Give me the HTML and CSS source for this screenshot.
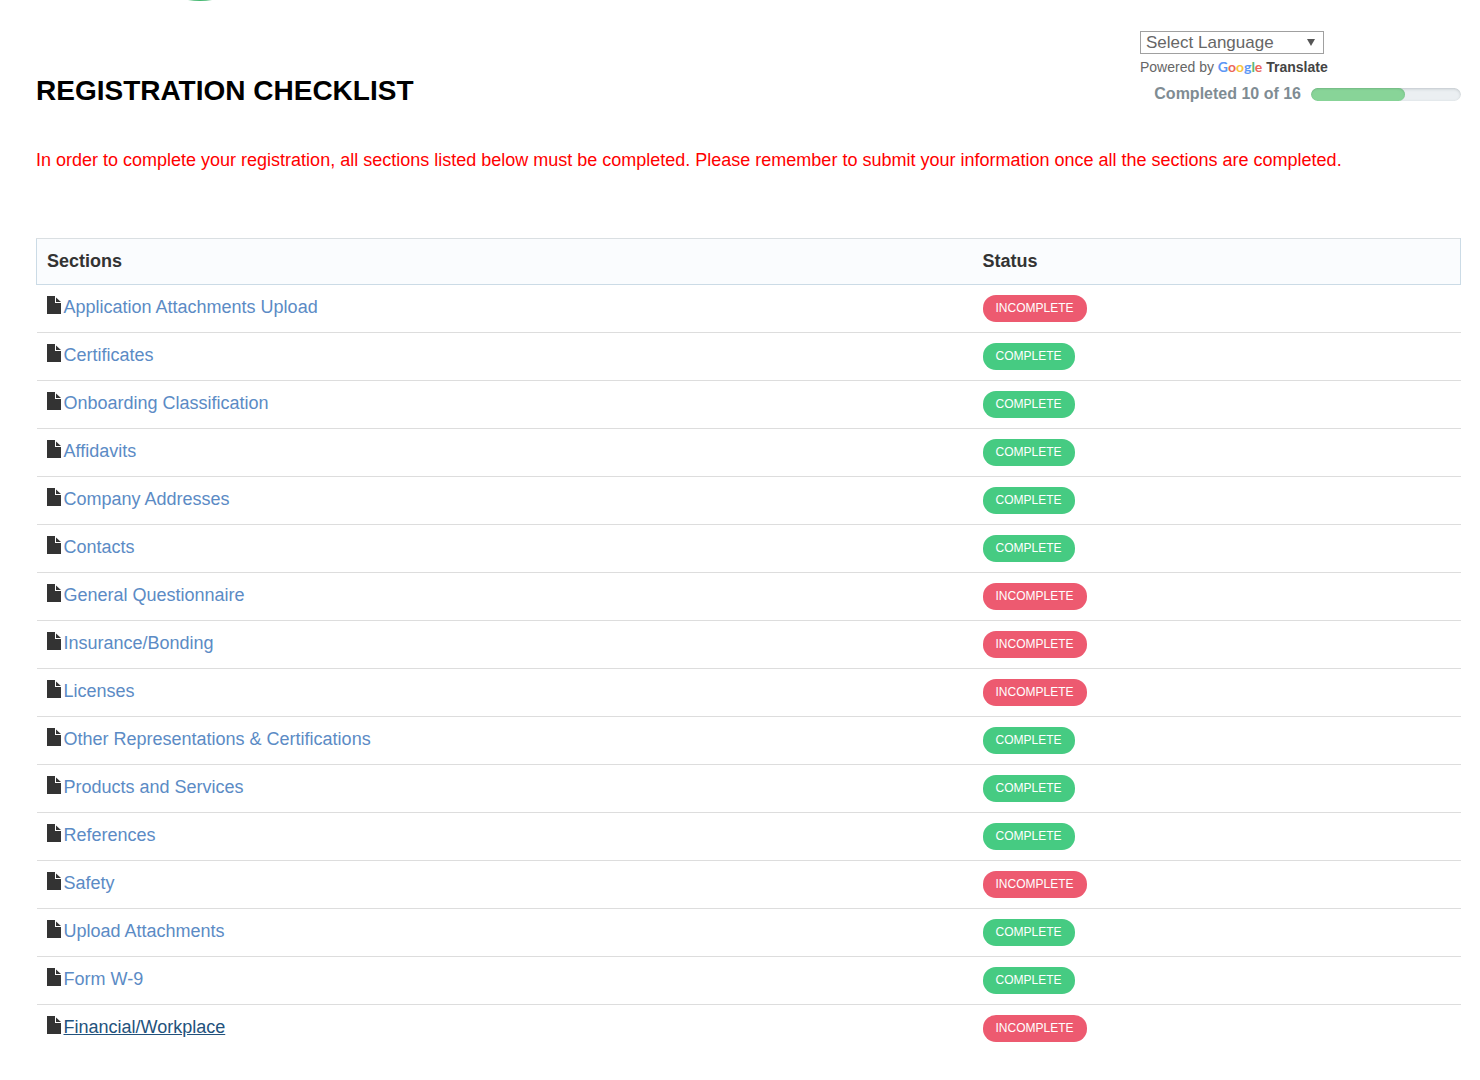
FILE: index.html
```html
<!DOCTYPE html>
<html lang="en">
<head>
<meta charset="utf-8">
<title>Registration Checklist</title>
<link rel="stylesheet" href="styles.css">
</head>
<body>
<svg class="symbols" aria-hidden="true">
  <symbol id="file" viewBox="0 0 14 18"><path d="M0 0h8v7h6v11H0z"/><path d="M9 1.500l5 4.500H9z"/></symbol>
</svg>
<div class="brand"><svg width="24" height="1" viewBox="0 0 24 1" aria-hidden="true"><path d="M0 0h24Q12 2 0 0z" fill="#45b871"/></svg></div>
<main class="page">
  <header class="top">
    <h1>REGISTRATION CHECKLIST</h1>
    <div class="tools">
      <div class="select-wrap">
        <select class="language" aria-label="Select Language"><option>Select Language</option></select>
        <svg class="arrow" width="8" height="7" viewBox="0 0 8 7" aria-hidden="true"><path d="M0 0h8L4 7z"/></svg>
      </div>
      <div class="powered">Powered by <span class="google"><span class="blue">G</span><span class="red">o</span><span class="yellow">o</span><span class="blue">g</span><span class="green">l</span><span class="red">e</span></span> <b>Translate</b></div>
      <div class="completion"><label for="done">Completed 10 of 16</label><progress id="done" value="10" max="16"></progress></div>
    </div>
  </header>
  <p class="notice">In order to complete your registration, all sections listed below must be completed. Please remember to submit your information once all the sections are completed.</p>
  <table class="checklist">
    <thead><tr><th>Sections</th><th class="status-col">Status</th></tr></thead>
    <tbody>
      <tr><td><svg class="file"><use href="#file"/></svg><a href="#">Application Attachments Upload</a></td><td><span class="badge incomplete">INCOMPLETE</span></td></tr>
      <tr><td><svg class="file"><use href="#file"/></svg><a href="#">Certificates</a></td><td><span class="badge complete">COMPLETE</span></td></tr>
      <tr><td><svg class="file"><use href="#file"/></svg><a href="#">Onboarding Classification</a></td><td><span class="badge complete">COMPLETE</span></td></tr>
      <tr><td><svg class="file"><use href="#file"/></svg><a href="#">Affidavits</a></td><td><span class="badge complete">COMPLETE</span></td></tr>
      <tr><td><svg class="file"><use href="#file"/></svg><a href="#">Company Addresses</a></td><td><span class="badge complete">COMPLETE</span></td></tr>
      <tr><td><svg class="file"><use href="#file"/></svg><a href="#">Contacts</a></td><td><span class="badge complete">COMPLETE</span></td></tr>
      <tr><td><svg class="file"><use href="#file"/></svg><a href="#">General Questionnaire</a></td><td><span class="badge incomplete">INCOMPLETE</span></td></tr>
      <tr><td><svg class="file"><use href="#file"/></svg><a href="#">Insurance/Bonding</a></td><td><span class="badge incomplete">INCOMPLETE</span></td></tr>
      <tr><td><svg class="file"><use href="#file"/></svg><a href="#">Licenses</a></td><td><span class="badge incomplete">INCOMPLETE</span></td></tr>
      <tr><td><svg class="file"><use href="#file"/></svg><a href="#">Other Representations &amp; Certifications</a></td><td><span class="badge complete">COMPLETE</span></td></tr>
      <tr><td><svg class="file"><use href="#file"/></svg><a href="#">Products and Services</a></td><td><span class="badge complete">COMPLETE</span></td></tr>
      <tr><td><svg class="file"><use href="#file"/></svg><a href="#">References</a></td><td><span class="badge complete">COMPLETE</span></td></tr>
      <tr><td><svg class="file"><use href="#file"/></svg><a href="#">Safety</a></td><td><span class="badge incomplete">INCOMPLETE</span></td></tr>
      <tr><td><svg class="file"><use href="#file"/></svg><a href="#">Upload Attachments</a></td><td><span class="badge complete">COMPLETE</span></td></tr>
      <tr><td><svg class="file"><use href="#file"/></svg><a href="#">Form W-9</a></td><td><span class="badge complete">COMPLETE</span></td></tr>
      <tr><td><svg class="file"><use href="#file"/></svg><a class="current" href="#">Financial/Workplace</a></td><td><span class="badge incomplete">INCOMPLETE</span></td></tr>
    </tbody>
  </table>
</main>
</body>
</html>
```

FILE: styles.css
```css
* { box-sizing: border-box; }
body {
  margin: 0;
  background: #fff;
  color: #333;
  font: 18px/24px "Liberation Sans", Arial, sans-serif;
}
.symbols { display: none; }
.brand { padding-left: 188px; height: 31px; }
.brand svg { display: block; }
.page { padding: 0 19px 36px 36px; }
.top { display: flex; justify-content: space-between; align-items: flex-end; }
h1 { margin: 0; color: #000; font-size: 28px; line-height: 26px; }
.tools { width: 321px; }
.select-wrap { position: relative; width: 184px; height: 23px; }
.language {
  appearance: none;
  display: block;
  width: 100%;
  height: 23px;
  padding: 0 5px;
  border: 1px solid #a0a0a0;
  border-radius: 0;
  background: #fff;
  color: #666;
  font: 17px/20px "Liberation Sans", Arial, sans-serif;
}
.arrow { position: absolute; right: 9px; top: 8px; fill: #555; pointer-events: none; }
.powered { margin-top: 4px; color: #666; font-size: 14px; line-height: 18px; white-space: nowrap; }
.powered b { color: #444; }
.google { font-family: Lato, sans-serif; font-weight: 700; line-height: 14px; }
.blue { color: #5c97f5; }
.red { color: #ec6659; }
.yellow { color: #f8c53a; }
.green { color: #5bb974; }
.completion {
  display: flex;
  justify-content: flex-end;
  align-items: center;
  gap: 10px;
  margin-top: 8px;
  color: #7f8c93;
  font-size: 16px;
  font-weight: 700;
  line-height: 20px;
}
progress {
  appearance: none;
  width: 150px;
  height: 13px;
  border: 0;
  border-radius: 7px;
  overflow: hidden;
}
progress::-webkit-progress-bar {
  border-radius: 7px;
  background: #ebeff2;
  box-shadow: inset 0 1px 3px #bfc5c9;
}
progress::-webkit-progress-value {
  border-radius: 7px;
  background: #88d498;
  box-shadow: inset 0 1px 2px #72b883;
}
.notice { margin: 44px 0 66px; color: #f00; }
.checklist { width: 100%; border-collapse: collapse; table-layout: fixed; }
.checklist th {
  height: 46px;
  padding: 0 10px 2px;
  background: #fafcfe;
  border-top: 1px solid #dadfe2;
  border-bottom: 1px solid #cbdbe6;
  text-align: left;
}
.checklist th:first-child { border-left: 1px solid #cbdbe6; }
.checklist th:last-child { border-right: 1px solid #cbdbe6; }
.status-col { width: 488px; }
.checklist td { height: 48px; padding: 10px 10px 9px; vertical-align: top; }
.checklist tr + tr td { border-top: 1px solid #ddd; }
.file { width: 14px; height: 18px; margin-right: 3px; vertical-align: -1px; fill: #333; }
a { color: #5b8bc5; text-decoration: none; }
a:hover, .current { color: #23527c; text-decoration: underline; }
.badge {
  display: block;
  width: fit-content;
  height: 27px;
  padding: 0 13px;
  border-radius: 13px;
  color: #fff;
  font-size: 12px;
  line-height: 26px;
}
.incomplete { background: #ed5a70; }
.complete { background: #46cb82; }
```
